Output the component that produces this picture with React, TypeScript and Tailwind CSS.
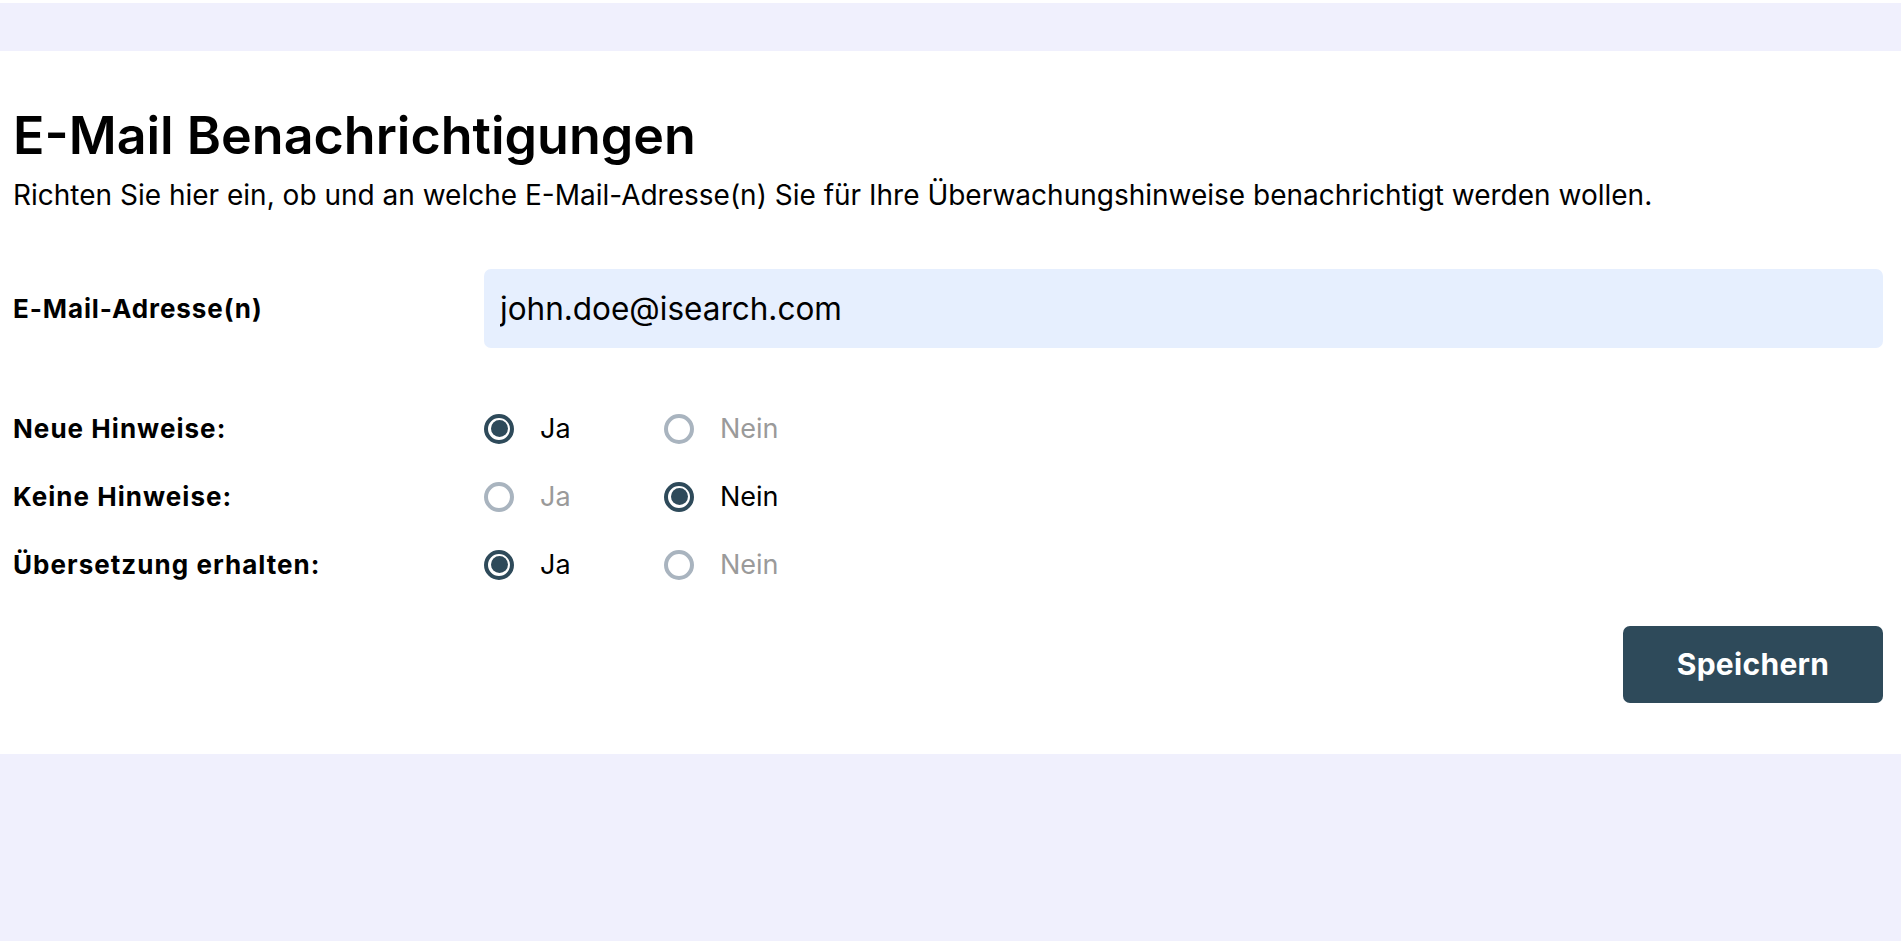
import { useState } from 'react'

type Choice = 'ja' | 'nein'

interface RadioRowProps {
  label: string
  value: Choice
  onChange: (value: Choice) => void
}

function RadioOption({
  checked,
  text,
  onClick,
}: {
  checked: boolean
  text: string
  onClick: () => void
}) {
  return (
    <button
      type="button"
      onClick={onClick}
      className="flex w-[180px] items-center gap-[26px] text-left"
    >
      <span
        className={`flex h-[30px] w-[30px] shrink-0 items-center justify-center rounded-full border-[4px] ${
          checked ? 'border-[#2e4a5a]' : 'border-[#a9b4bf]'
        }`}
      >
        {checked && <span className="h-[17px] w-[17px] rounded-full bg-[#2e4a5a]" />}
      </span>
      <span className={`text-[27px] ${checked ? 'text-black' : 'text-[#9a9a9a]'}`}>{text}</span>
    </button>
  )
}

function RadioRow({ label, value, onChange }: RadioRowProps) {
  return (
    <div className="flex h-[68px] items-center">
      <div className="w-[471px] shrink-0 text-[26px] font-bold tracking-[0.04em] text-black">{label}</div>
      <RadioOption checked={value === 'ja'} text="Ja" onClick={() => onChange('ja')} />
      <RadioOption checked={value === 'nein'} text="Nein" onClick={() => onChange('nein')} />
    </div>
  )
}

export default function App() {
  const [email, setEmail] = useState('john.doe@isearch.com')
  const [neue, setNeue] = useState<Choice>('ja')
  const [keine, setKeine] = useState<Choice>('nein')
  const [uebersetzung, setUebersetzung] = useState<Choice>('ja')

  return (
    <div className="min-h-screen border-t-[3px] border-white bg-[#f0f0fd] pt-[48px] font-['Inter',sans-serif]">
      <section className="bg-white pb-[51px] pl-[13px] pr-[18px] pt-[54px]">
        <h1 className="text-[52px] leading-[1.2] font-semibold text-black">E-Mail Benachrichtigungen</h1>
        <p className="mt-[12px] text-[28px] leading-[1.2] text-black">
          Richten Sie hier ein, ob und an welche E-Mail-Adresse(n) Sie für Ihre Überwachungshinweise benachrichtigt werden wollen.
        </p>

        <div className="mt-[56px] flex items-center">
          <label htmlFor="email" className="w-[471px] shrink-0 text-[26px] font-bold tracking-[0.035em] text-black">
            E-Mail-Adresse(n)
          </label>
          <input
            id="email"
            value={email}
            onChange={(e) => setEmail(e.target.value)}
            className="h-[79px] flex-1 rounded-[7px] bg-[#e6effe] px-[16px] text-[31.5px] text-black outline-none"
          />
        </div>

        <div className="mt-[47px]">
          <RadioRow label="Neue Hinweise:" value={neue} onChange={setNeue} />
          <RadioRow label="Keine Hinweise:" value={keine} onChange={setKeine} />
          <RadioRow label="Übersetzung erhalten:" value={uebersetzung} onChange={setUebersetzung} />
        </div>

        <div className="mt-[27px] flex justify-end">
          <button
            type="button"
            className="h-[77px] w-[260px] rounded-[7px] bg-[#2e4a5a] text-[30px] font-bold tracking-[0.01em] text-white"
          >
            Speichern
          </button>
        </div>
      </section>
    </div>
  )
}
